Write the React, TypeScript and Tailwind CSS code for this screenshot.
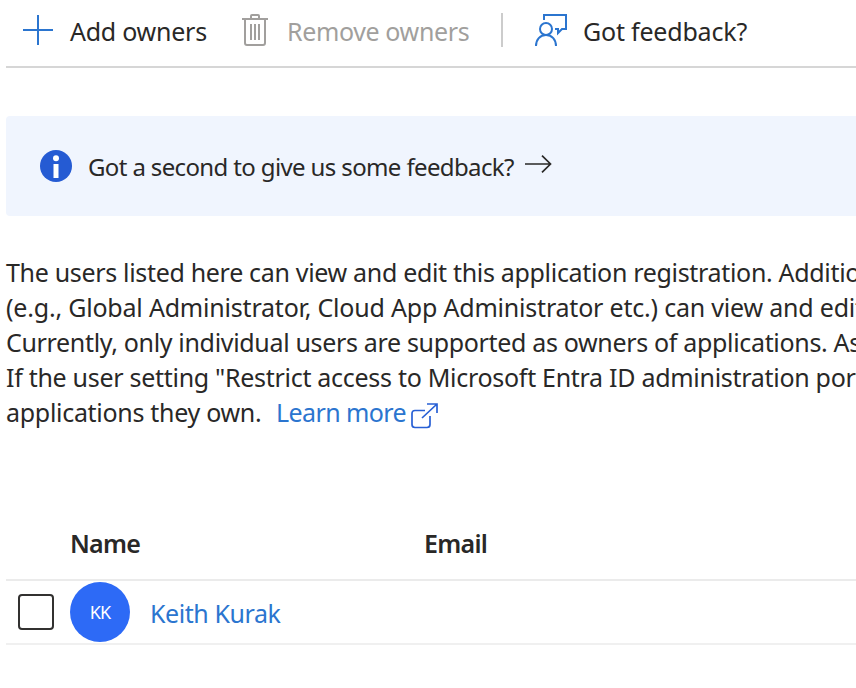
const paragraph = [
  { text: 'The users listed here can view and edit this application registration. Additionally,', spacing: 'tracking-[-0.32px]' },
  { text: '(e.g., Global Administrator, Cloud App Administrator etc.) can view and edit', spacing: 'tracking-[-0.2px]' },
  { text: 'Currently, only individual users are supported as owners of applications. As', spacing: 'tracking-[-0.33px]' },
  { text: 'If the user setting "Restrict access to Microsoft Entra ID administration portal', spacing: 'tracking-[-0.29px]' },
];

function TrashIcon() {
  return (
    <svg className="mt-[14px] h-8 w-[26px] shrink-0" viewBox="0 0 26 32" fill="none" stroke="#a19f9d" strokeWidth="2">
      <path d="M0 5H26M9 5V2Q9 1 10 1H16Q17 1 17 2V5M3 5V29Q3 31 5 31H21Q23 31 23 29V5M9 10V26M13 10V26M17 10V26" />
    </svg>
  );
}

function FeedbackIcon() {
  return (
    <svg className="mt-[14px] h-8 w-8 shrink-0" viewBox="0 0 32 32" fill="none" stroke="#2b75cf" strokeWidth="2">
      <circle cx="11" cy="15" r="6" />
      <path d="M1 32C1 25.5 5 21 11 21S21 25.5 21 32M9 6V1H31V15H27L23 19V15H20" />
    </svg>
  );
}

export default function App() {
  return (
    <div className="h-[688px] w-[856px] overflow-hidden bg-white pl-[6px] font-['Noto_Sans','Open_Sans',sans-serif] text-[25px] leading-[35px] whitespace-nowrap text-[#292827]">
      <header className="flex h-[68px] items-start border-b-2 border-[#d6d6d6]">
        <svg className="mt-[15px] ml-[17px] h-[30px] w-[30px] shrink-0" viewBox="0 0 30 30" stroke="#2b75cf" strokeWidth="2">
          <path d="M0 15H30M15 0V30" />
        </svg>
        <div className="mt-[14px] ml-[17px] w-[172px] tracking-[-0.25px]">Add owners</div>
        <TrashIcon />
        <div className="mt-[14px] ml-[19px] w-[214px] tracking-[-0.37px] text-[#a19f9d]">Remove owners</div>
        <div className="mt-[13px] h-[34px] w-[2px] bg-[#cccccc]" />
        <div className="w-8" />
        <FeedbackIcon />
        <div className="mt-[14px] ml-4 tracking-[-0.2px]">Got feedback?</div>
      </header>

      <section className="mt-12 flex h-[100px] items-start rounded-l-[4px] bg-[#f0f5fe] pl-[34px]">
        <svg className="mt-[34px] h-8 w-8 shrink-0" viewBox="0 0 32 32">
          <circle cx="16" cy="16" r="16" fill="#255bd3" />
          <circle cx="16" cy="8.3" r="3" fill="white" />
          <rect x="13.5" y="14" width="5" height="14" fill="white" />
        </svg>
        <div className="mt-[33px] ml-4 w-[437px] text-[24px] tracking-[-0.63px]">Got a second to give us some feedback?</div>
        <svg className="mt-[39px] h-[18px] w-[27px]" viewBox="0 0 27 18" fill="none" stroke="#292827" strokeWidth="1.7">
          <path d="M0 9H25.5M17 .7L25.5 9L17 17.3" />
        </svg>
      </section>

      <section className="mt-[39px]">
        {paragraph.map((line) => (
          <div key={line.text} className={line.spacing}>{line.text}</div>
        ))}
        <div className="flex items-start">
          <span className="w-[270px] tracking-[-0.3px]">applications they own.</span>
          <a className="w-[135px] tracking-[-0.58px] text-[#2b75cf]">Learn more</a>
          <svg className="mt-2 h-[26px] w-[27px]" viewBox="0 0 27 26" fill="none" stroke="#2860d5" strokeWidth="1.7">
            <path d="M14 7.5H4Q1 7.5 1 10.5V21.5Q1 24.5 4 24.5H16Q19 24.5 19 21.5V13M16 1H26V10M26 1L11 15" />
          </svg>
        </div>
      </section>

      <section className="mt-[96px]">
        <div className="flex h-[55px] items-start border-b-2 border-[#ebebeb] pl-[64px] font-semibold">
          <div className="w-[354px] tracking-[-0.75px]">Name</div>
          <div className="tracking-[-0.7px]">Email</div>
        </div>
        <div className="flex h-16 items-center border-b-2 border-[#f0f0f0] pl-3">
          <div className="h-9 w-9 rounded-[4px] border-2 border-[#323130]" />
          <div className="ml-4 flex h-[60px] w-[60px] items-center justify-center rounded-full bg-[#2d6af6] text-[18px] tracking-[-0.8px] text-white">KK</div>
          <a className="ml-5 pt-[2px] tracking-[-0.42px] text-[#2b75cf]">Keith Kurak</a>
        </div>
      </section>
    </div>
  );
}
